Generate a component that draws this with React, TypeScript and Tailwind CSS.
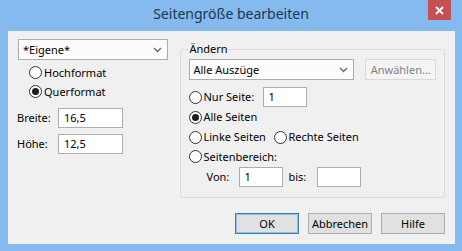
import React from "react";

function Radio({ checked, label, labelClass }: { checked?: boolean; label: string; labelClass?: string }) {
  return (
    <div className="flex items-center">
      <span className="w-[13px] h-[13px] rounded-full border border-[#333333] bg-white flex items-center justify-center shrink-0">
        {checked && <span className="w-[7px] h-[7px] rounded-full bg-[#1e1e1e]" />}
      </span>
      <span className={"ml-[2px] " + (labelClass ?? "")}>{label}</span>
    </div>
  );
}

function Chevron() {
  return (
    <svg width="9" height="6" viewBox="0 0 9 6" className="shrink-0">
      <path d="M1 1 L4.5 4.5 L8 1" fill="none" stroke="#666666" strokeWidth="1.4" />
    </svg>
  );
}

function Select({ value, className }: { value: string; className: string }) {
  return (
    <div className={"flex items-center justify-between border border-[#acacac] bg-[#fcfcfc] pl-[4px] pr-[5px] " + className}>
      <span>{value}</span>
      <Chevron />
    </div>
  );
}

function Input({ value, className }: { value: string; className: string }) {
  return (
    <div className={"flex items-center border border-[#abadb3] bg-white pl-[5px] h-[20px] " + className}>
      {value}
    </div>
  );
}

function Button({ label, primary }: { label: string; primary?: boolean }) {
  return (
    <div
      className={
        "w-[64px] h-[21px] flex items-center justify-center bg-[#e1e1e1] border " +
        (primary ? "border-[#3c7fb1] shadow-[inset_0_0_0_1px_#8fc0ea]" : "border-[#adadad]")
      }
    >
      {label}
    </div>
  );
}

export default function App() {
  return (
    <div className="w-[462px] h-[251px] bg-[#84baed] flex flex-col font-['Noto_Sans',sans-serif] text-[11px] leading-[16px] text-black relative overflow-hidden">
      <div className="h-[31px] flex justify-center pt-[4px] text-[14px] leading-[20px] text-[#1d3550]">
        Seitengröße bearbeiten
      </div>
      <div className="absolute top-0 right-[11px] w-[23px] h-[20px] bg-[#c75050] flex items-center justify-center">
        <svg width="9" height="9" viewBox="0 0 9 9">
          <path d="M1 1 L8 8 M8 1 L1 8" stroke="white" strokeWidth="1.8" />
        </svg>
      </div>
      <div className="ml-[8px] mr-[7px] h-[213px] bg-[#f0f0f0] flex flex-col pl-[10px] pr-[10px] pt-[8px]">
        <div className="flex">
          <div className="w-[151px] flex flex-col">
            <Select value="*Eigene*" className="h-[21px]" />
            <div className="flex flex-col pl-[11px] mt-[3px]">
              <div className="h-[19px] flex items-center">
                <Radio label="Hochformat" />
              </div>
              <div className="h-[19px] flex items-center">
                <Radio checked label="Querformat" />
              </div>
            </div>
            <div className="flex items-center mt-[7px] -ml-[1px]">
              <span className="w-[41px]">Breite:</span>
              <Input value="16,5" className="w-[65px]" />
            </div>
            <div className="flex items-center mt-[6px] -ml-[1px]">
              <span className="w-[41px]">Höhe:</span>
              <Input value="12,5" className="w-[65px]" />
            </div>
          </div>
          <fieldset className="ml-[12px] w-[268px] border border-[#dcdcdc] rounded-[2px] px-[8px] pb-[10px] mt-[2px] min-w-0">
            <legend className="px-[1px] leading-[16px]">Ändern</legend>
            <div className="flex items-center mt-[2px]">
              <Select value="Alle Auszüge" className="w-[167px] h-[21px]" />
              <div className="ml-[11px] w-[71px] h-[21px] flex items-center justify-center border border-[#d9d9d9] bg-[#f4f4f4] text-[#838383]">
                Anwählen...
              </div>
            </div>
            <div className="flex flex-col mt-[7px]">
              <div className="h-[20px] flex items-center">
                <Radio label="Nur Seite:" labelClass="w-[59px]" />
                <Input value="1" className="w-[44px]" />
              </div>
              <div className="h-[20px] flex items-center">
                <Radio checked label="Alle Seiten" />
              </div>
              <div className="h-[20px] flex items-center">
                <Radio label="Linke Seiten" labelClass="w-[70px]" />
                <Radio label="Rechte Seiten" />
              </div>
              <div className="h-[19px] flex items-center">
                <Radio label="Seitenbereich:" />
              </div>
              <div className="h-[21px] flex items-center pl-[18px]">
                <span className="w-[32px]">Von:</span>
                <Input value="1" className="w-[44px]" />
                <span className="ml-[6px] w-[28px]">bis:</span>
                <Input value="" className="w-[44px]" />
              </div>
            </div>
          </fieldset>
        </div>
        <div className="flex justify-end gap-[9px] mt-[15px]">
          <Button label="OK" primary />
          <Button label="Abbrechen" />
          <Button label="Hilfe" />
        </div>
      </div>
    </div>
  );
}
